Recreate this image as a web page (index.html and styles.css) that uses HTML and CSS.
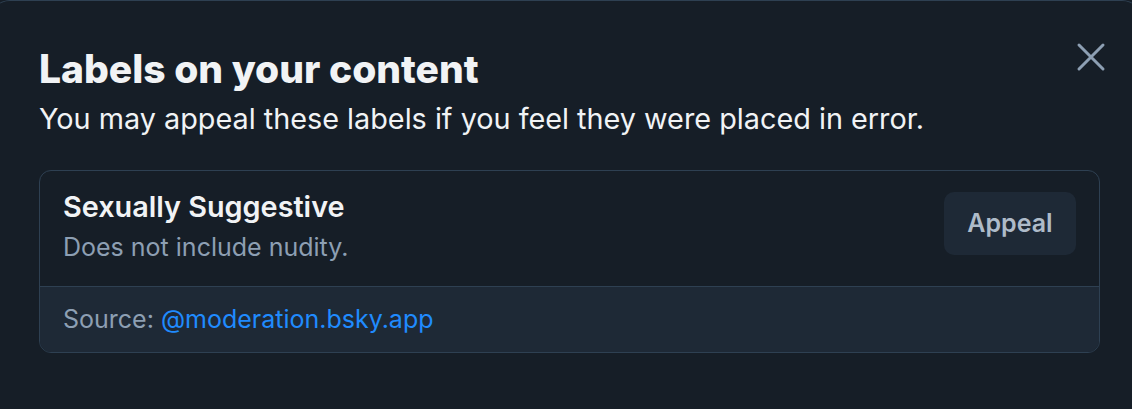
FILE: index.html
```html
<!DOCTYPE html>
<html lang="en">
<head>
    <meta charset="UTF-8">
    <title>Labels on your content</title>
    <link rel="stylesheet" href="styles.css">
</head>
<body>
    <div class="dialog">
        <div class="header">
            <div class="heading">
                <h1 class="title">Labels on your content</h1>
                <p class="subtitle">You may appeal these labels if you feel they were placed in error.</p>
            </div>
            <button class="closeBtn" aria-label="Close">
                <svg width="30" height="30" viewBox="0 0 30 30">
                    <path d="M3 3 L27 27 M27 3 L3 27" stroke="#8d9fb3" stroke-width="3" stroke-linecap="round" fill="none"/>
                </svg>
            </button>
        </div>
        <div class="labelCard">
            <div class="labelMain">
                <div class="labelText">
                    <div class="labelName">Sexually Suggestive</div>
                    <div class="labelDesc">Does not include nudity.</div>
                </div>
                <button class="appealBtn">Appeal</button>
            </div>
            <div class="labelSource">
                Source: <a href="#">@moderation.bsky.app</a>
            </div>
        </div>
    </div>
</body>
</html>
```

FILE: styles.css
```css
* {
    padding: 0px;
    margin: 0px;
    box-sizing: border-box;
}
html, body {
    height: 100%;
}
body {
    background: #161e27;
    font-family: Inter, "Noto Sans", sans-serif;
    color: #f1f3f5;
    overflow: hidden;
}
.dialog {
    margin: 0 -10px;
    height: 100%;
    border-top: 1px solid #2e4052;
    border-radius: 20px 20px 0 0;
    background: #161e27;
    padding: 45px 36px 0 49px;
}
.header {
    display: flex;
    justify-content: space-between;
    align-items: flex-start;
}
.title {
    font-size: 39px;
    font-weight: 800;
    line-height: 46px;
}
.subtitle {
    margin-top: 10px;
    font-size: 28.8px;
    line-height: 34px;
    color: #f1f3f5;
}
.closeBtn {
    margin-top: -4px;
    background: none;
    border: none;
    width: 30px;
    height: 30px;
    cursor: pointer;
}
.labelCard {
    margin-top: 34px;
    width: 1061px;
    border: 1px solid #2e4052;
    border-radius: 12px;
    overflow: hidden;
}
.labelMain {
    display: flex;
    justify-content: space-between;
    align-items: center;
    padding: 19px 23px 24px 23px;
}
.labelName {
    font-size: 28.8px;
    font-weight: 600;
    line-height: 34px;
}
.labelDesc {
    margin-top: 8px;
    font-size: 25px;
    line-height: 30px;
    color: #8d9fb3;
}
.appealBtn {
    width: 132px;
    height: 63px;
    margin-bottom: 6px;
    border: none;
    border-radius: 10px;
    background: #1e2936;
    color: #aebbc9;
    font-family: Inter, "Noto Sans", sans-serif;
    font-size: 25px;
    font-weight: 600;
    cursor: pointer;
}
.labelSource {
    border-top: 1px solid #2e4052;
    background: #1e2936;
    padding: 17px 23px 18px 23px;
    font-size: 25px;
    line-height: 30px;
    color: #8d9fb3;
}
.labelSource a {
    color: #208bfe;
    text-decoration: none;
}
```
